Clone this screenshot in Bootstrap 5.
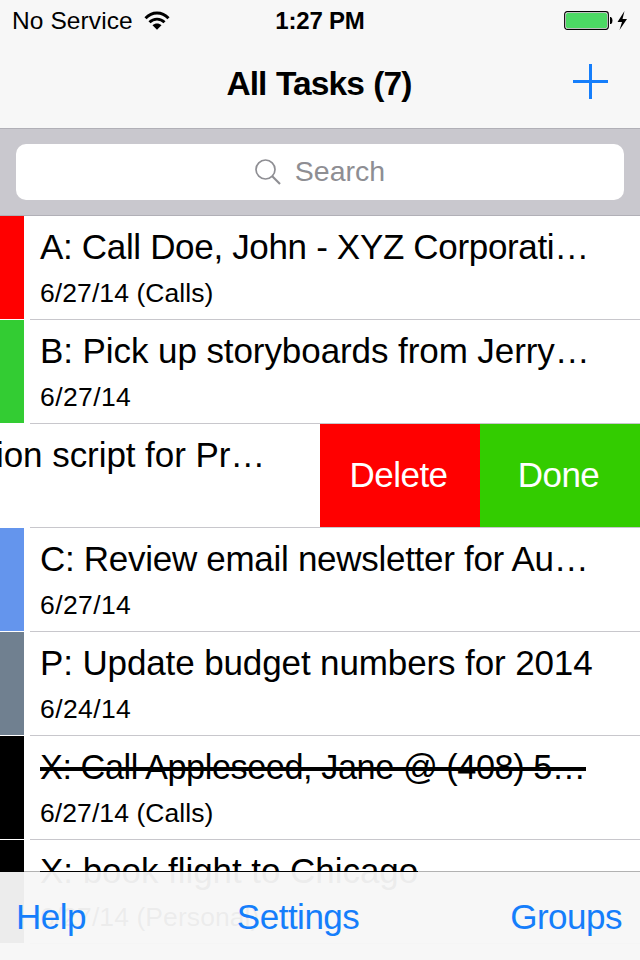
<!DOCTYPE html>
<html lang="en">
<head>
<meta charset="utf-8">
<meta name="viewport" content="width=device-width, initial-scale=1">
<title>All Tasks</title>
<link href="https://cdn.jsdelivr.net/npm/bootstrap@5.3.0/dist/css/bootstrap.min.css" rel="stylesheet">
<style>
body{font-family:"Liberation Sans",Arial,sans-serif;color:#000;background:#f7f7f7;line-height:1}
.screen{width:640px;height:960px;background:#fff}
.topbar{height:129px;background:#f7f7f7;border-bottom:1px solid #b1b0b7}
.status{height:40px;padding:1px 11px 0 12px;font-size:24.5px}
.status .carrier{letter-spacing:.1px;padding-top:2px}
.status .wifi{margin-left:11px}
.status .clock{letter-spacing:-.2px;font-size:24px}
.heading{height:88px}
.heading h1{font-size:33.5px;letter-spacing:-.9px;word-spacing:1px;padding:1px 2px 0 0}
.add-btn{right:32px;top:24px;line-height:0}
.searchbar{height:87px;background:#c9c8ce;border-bottom:1px solid #b1b0b7;padding:15px 16px}
.search-field{height:56px;border-radius:10px;color:#8e8e93;font-size:28.5px;gap:14px}
.search-field span{padding-bottom:2px}
.task{height:104px}
.stripe{width:24px;height:103px;flex:none}
.task-body{margin-left:6px;padding:11px 0 0 10px;border-bottom:1px solid #c8c7cc;min-width:0;white-space:nowrap}
.task-title{font-size:35px;line-height:40px;height:40px}
.task-date{font-size:26.5px;line-height:30px;margin-top:11px;letter-spacing:.4px}
.task-date.grouped{letter-spacing:.08px}
.t1{letter-spacing:-.33px}.t2{letter-spacing:-.08px}.t3{letter-spacing:-.06px}.t4{letter-spacing:-.29px}.t5{letter-spacing:-.12px}.t6{letter-spacing:-.45px;font-size:34.3px}.t7{letter-spacing:-.05px}
.pri-a{background:#f00}.pri-b{background:#3c3}.pri-c{background:#6495ed}.pri-p{background:#708090}.pri-x{background:#000}
.swiped{background:linear-gradient(#c8c7cc,#c8c7cc) bottom/610px 1px no-repeat;background-position:30px 103px}
.swiped .task-body{padding-left:0;margin-left:0;border:0}
.swiped .task-title{margin-left:-4px}
.action{width:160px;height:103px;color:#fff;font-size:35px;letter-spacing:-.5px;border:0;padding:0 3px 3px 0}
.action-done{background:#3c0}
.struck{position:relative;display:inline-block}
.struck::after{content:"";position:absolute;left:0;right:0;top:20px;height:4px;background:#000}
.t7 .struck::after{height:1px}
.toolbar{height:89px;background:rgba(247,247,247,.955);background-clip:padding-box;border-top:1px solid rgba(0,0,0,.3);padding:0 18px 0 16px;font-size:35px;letter-spacing:-.5px}
.toolbar a,.add-btn{color:#157efb}
.toolbar a{text-decoration:none}
</style>
</head>
<body>
<main class="screen position-relative overflow-hidden">
  <header class="topbar">
    <div class="status d-flex align-items-center position-relative">
      <span class="carrier">No Service</span>
      <svg class="wifi" width="26" height="20" viewBox="0 0 26 20"><g fill="none" stroke="#000" stroke-width="2.9"><path d="M1.500 7.300C8 .3 18 .3 24.500 7.300"/><path d="M5.500 11.300C9.700 7 16.300 7 20.500 11.300"/></g><path d="M8.500 14.300C11 11.900 15 11.900 17.500 14.300L13 18.800Z"/></svg>
      <span class="clock fw-bold position-absolute start-0 end-0 text-center">1:27 PM</span>
      <svg class="ms-auto" width="66" height="22" viewBox="0 0 66 22"><rect x="1.700" y="1.700" width="43.600" height="17.600" rx="2.500" fill="#fff" stroke="#000" stroke-width="1.200"/><rect x="3" y="3" width="41" height="15" rx="1.500" fill="#4cd964"/><path d="M47 7h1q1.500 1 1.500 3.500t-1.500 3.500h-1zM61.500 1L54.500 12H59L56.500 20L64 9H59.500Z"/></svg>
    </div>
    <div class="heading d-flex justify-content-center align-items-center position-relative">
      <h1 class="fw-bold mb-0">All Tasks (7)</h1>
      <a class="add-btn position-absolute" href="#" aria-label="Add task"><svg width="35" height="35" viewBox="0 0 35 35"><path d="M17.500 0V35M0 17.500H35" stroke="currentColor" stroke-width="3"/></svg></a>
    </div>
  </header>
  <div class="searchbar">
    <div class="search-field bg-white d-flex justify-content-center align-items-center">
      <svg width="26" height="26" viewBox="0 0 26 26" fill="none" stroke="#8e8e93" stroke-width="1.700"><circle cx="10.500" cy="10.500" r="9.500"/><path d="M17 17L25 25" stroke-width="2.200"/></svg>
      <span>Search</span>
    </div>
  </div>
  <section>
    <div class="task d-flex"><div class="stripe pri-a"></div><div class="task-body flex-grow-1"><div class="task-title t1">A: Call Doe, John - XYZ Corporati…</div><div class="task-date grouped">6/27/14 (Calls)</div></div></div>
    <div class="task d-flex"><div class="stripe pri-b"></div><div class="task-body flex-grow-1"><div class="task-title t2">B: Pick up storyboards from Jerry…</div><div class="task-date">6/27/14</div></div></div>
    <div class="task d-flex swiped"><div class="task-body flex-grow-1"><div class="task-title t3">ion script for Pr…</div></div><button class="action pri-a">Delete</button><button class="action action-done">Done</button></div>
    <div class="task d-flex"><div class="stripe pri-c"></div><div class="task-body flex-grow-1"><div class="task-title t4">C: Review email newsletter for Au…</div><div class="task-date">6/27/14</div></div></div>
    <div class="task d-flex"><div class="stripe pri-p"></div><div class="task-body flex-grow-1"><div class="task-title t5">P: Update budget numbers for 2014</div><div class="task-date">6/24/14</div></div></div>
    <div class="task d-flex"><div class="stripe pri-x"></div><div class="task-body flex-grow-1"><div class="task-title t6"><span class="struck">X: Call Appleseed, Jane @ (408) 5…</span></div><div class="task-date grouped">6/27/14 (Calls)</div></div></div>
    <div class="task d-flex"><div class="stripe pri-x"></div><div class="task-body flex-grow-1"><div class="task-title t7"><span class="struck">X: book flight to Chicago</span></div><div class="task-date grouped">6/27/14 (Personal)</div></div></div>
  </section>
  <nav class="toolbar position-absolute bottom-0 start-0 end-0 d-flex justify-content-between align-items-center">
    <a href="#">Help</a><a href="#">Settings</a><a href="#">Groups</a>
  </nav>
</main>
<script src="https://cdn.jsdelivr.net/npm/bootstrap@5.3.0/dist/js/bootstrap.bundle.min.js"></script>
</body>
</html>
